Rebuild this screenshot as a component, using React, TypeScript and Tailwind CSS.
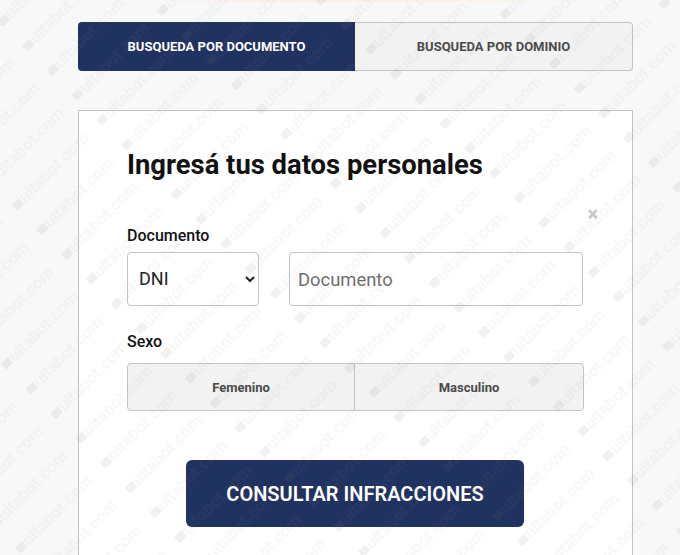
import { useState } from "react";

type Tab = "documento" | "dominio";

function Watermark() {
  return (
    <svg className="pointer-events-none absolute inset-0 h-full w-full">
      <defs>
        <pattern
          id="marca"
          width="120"
          height="35"
          patternUnits="userSpaceOnUse"
          patternTransform="rotate(-45) translate(-20 -1)"
        >
          <rect x="3" y="14" width="10" height="8" rx="1" fill="#777" opacity="0.1" />
          <text x="14" y="23" fontFamily="Roboto, sans-serif" fontSize="17" fontWeight="500" fill="#888" opacity="0.07">
            ultabot.com
          </text>
        </pattern>
      </defs>
      <rect width="100%" height="100%" fill="url(#marca)" />
    </svg>
  );
}

export default function App() {
  const [tab, setTab] = useState<Tab>("documento");

  return (
    <div className="relative h-[555px] w-[680px] overflow-hidden bg-[#f8f8f8] font-['Roboto',sans-serif]">
      <div className="h-[2px] w-full bg-[linear-gradient(90deg,#f8f8f8_22%,#fbeee8_40%,#fbf3e4_65%,#f8f8f8_85%)]" />
      <div className="ml-[78px] w-[555px] pt-[20px]">
        <div className="flex h-[49px]">
          <button
            onClick={() => setTab("documento")}
            className="w-[277px] rounded-l-[4px] bg-[#20325f] text-[13px] font-bold text-white"
          >
            BUSQUEDA POR DOCUMENTO
          </button>
          <button
            onClick={() => setTab("dominio")}
            className="flex-1 rounded-r-[4px] border border-l-0 border-[#c4c4c4] bg-[#f2f2f2] text-[13px] font-bold text-[#4a4a4a]"
          >
            BUSQUEDA POR DOMINIO
          </button>
        </div>

        <div className="relative mt-[39px] h-[480px] border border-[#c4c4c4] bg-white px-[48px] pt-[37px]">
          <h1 className="text-[27.4px] leading-[34px] font-bold text-[#111]">Ingresá tus datos personales</h1>
          <span className="absolute right-[34px] top-[93px] text-[20px] leading-[20px] font-black text-[#c8c8c8]">×</span>

          <label className="mt-[44px] block text-[16px] leading-[20px] font-medium text-[#111]">Documento</label>
          <div className="mt-[6px] flex gap-[30px]">
            <select className="h-[54px] w-[132px] rounded-[4px] border border-[#c4c4c4] bg-white pb-[2px] pl-[7px] text-[18px] text-[#222]">
              <option>DNI</option>
              <option>LE</option>
              <option>LC</option>
            </select>
            <input
              placeholder="Documento"
              className="h-[54px] w-[294px] rounded-[4px] border border-[#c4c4c4] bg-white px-[8px] text-[18.4px] placeholder:text-[#6f6f6f]"
            />
          </div>

          <label className="mt-[26px] block text-[16px] leading-[20px] font-medium text-[#111]">Sexo</label>
          <div className="mt-[11px] flex h-[48px] w-[457px] rounded-[4px] border border-[#c4c4c4] bg-[#f2f2f2] text-[13px] font-bold text-[#4a4a4a]">
            <button className="w-[227px] border-r border-[#c4c4c4] pt-[1px]">Femenino</button>
            <button className="flex-1 pt-[1px]">Masculino</button>
          </div>

          <button className="mt-[49px] ml-[59px] h-[67px] w-[338px] rounded-[6px] bg-[#20325f] text-[20px] font-semibold text-white">
            CONSULTAR INFRACCIONES
          </button>
        </div>
      </div>
      <Watermark />
    </div>
  );
}
